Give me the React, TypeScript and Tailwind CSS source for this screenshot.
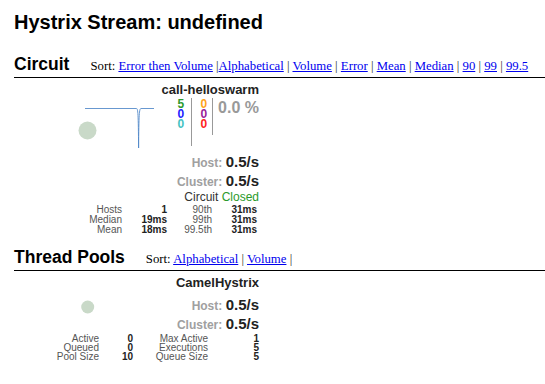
import React from "react";

const sans = { fontFamily: '"Liberation Sans", Arial, Helvetica, sans-serif' };
const serif = { fontFamily: '"Liberation Serif", "Times New Roman", serif' };

function Link({ children }: { children: React.ReactNode }) {
  return <a className="text-[#0000ee] underline cursor-pointer">{children}</a>;
}

function Sep({ text }: { text: string }) {
  return <span className="text-[#333]">{text}</span>;
}

function SectionHeader({ title, children }: { title: string; children: React.ReactNode }) {
  return (
    <div className="flex items-baseline border-b border-black pb-[3px]">
      <div className="text-[17.5px] font-bold leading-[20px] text-black">{title}</div>
      <div className="ml-[21px] text-[12.75px] leading-[15px] text-black" style={serif}>
        {children}
      </div>
    </div>
  );
}

function RateRows() {
  return (
    <div className="flex flex-col items-end">
      <div className="leading-[17px] whitespace-pre">
        <span className="text-[12px] font-bold text-[#a0a0a0]">Host: </span>
        <span className="text-[15px] font-bold text-[#222]">0.5/s</span>
      </div>
      <div className="leading-[17px] whitespace-pre">
        <span className="text-[12px] font-bold text-[#a0a0a0]">Cluster: </span>
        <span className="text-[15px] font-bold text-[#222]">0.5/s</span>
      </div>
    </div>
  );
}

export default function App() {
  return (
    <div className="min-h-[384px] w-[545px] bg-white pl-[14px] text-black" style={sans}>
      <div className="pt-[11px] text-[20px] font-bold leading-[23px]">Hystrix Stream: undefined</div>

      <div className="mt-[20px]">
        <SectionHeader title="Circuit">
          Sort: <Link>Error then Volume</Link> <Sep text="|" />
          <Link>Alphabetical</Link> <Sep text="|" /> <Link>Volume</Link> <Sep text="|" /> <Link>Error</Link>{" "}
          <Sep text="|" /> <Link>Mean</Link> <Sep text="|" /> <Link>Median</Link> <Sep text="|" /> <Link>90</Link>{" "}
          <Sep text="|" /> <Link>99</Link> <Sep text="|" /> <Link>99.5</Link>
        </SectionHeader>
      </div>

      {/* Circuit monitor */}
      <div className="flex w-[245px] flex-col">
        <div className="flex">
          <svg width="143" height="70" viewBox="0 0 143 70" className="shrink-0">
            <circle cx="73.5" cy="52.5" r="9" fill="#c9d9c8" />
            <path
              d="M71 30.5 H122.5 C124 30.5 124.3 36 124.6 70 C124.9 36 125.2 30.5 127 30.5 H140"
              fill="none"
              stroke="#4d86c8"
              strokeWidth="1"
              opacity="0.85"
            />
          </svg>
          <div className="flex flex-1 flex-col items-end">
            <div className="mt-[4px] text-[13px] font-bold leading-[16px] text-[#222]">call-helloswarm</div>
            <div className="flex items-start">
              <div className="flex h-[48px] w-[16px] flex-col items-end border-r border-[#999] pr-[7px] pt-[1px] text-[12px] font-bold leading-[10px]">
                <span className="text-[#2e9a2e]">5</span>
                <span className="text-[#2222ff]">0</span>
                <span className="text-[#44c2c2]">0</span>
              </div>
              <div className="flex h-[37px] w-[21px] flex-col items-end border-r border-[#999] pr-[5px] pt-[1px] text-[12px] font-bold leading-[10px]">
                <span className="text-[#ffa31a]">0</span>
                <span className="text-[#992299]">0</span>
                <span className="text-[#ff2222]">0</span>
              </div>
              <div className="pl-[5px] pt-[2px] text-[16px] font-bold leading-[16px] text-[#999]">0.0 %</div>
            </div>
          </div>
        </div>

        <div className="mt-[5px]">
          <RateRows />
        </div>
        <div className="text-right text-[12px] leading-[13px] text-[#333]">
          Circuit <span className="text-[#2a9a2a]">Closed</span>
        </div>

        <div className="mt-[1px] grid grid-cols-[108px_45px_45px_45px] text-right text-[10px] leading-[10px]">
          <span className="text-[#555]">Hosts</span>
          <span className="font-bold text-[#222]">1</span>
          <span className="text-[#555]">90th</span>
          <span className="font-bold text-[#222]">31ms</span>
          <span className="text-[#555]">Median</span>
          <span className="font-bold text-[#222]">19ms</span>
          <span className="text-[#555]">99th</span>
          <span className="font-bold text-[#222]">31ms</span>
          <span className="text-[#555]">Mean</span>
          <span className="font-bold text-[#222]">18ms</span>
          <span className="text-[#555]">99.5th</span>
          <span className="font-bold text-[#222]">31ms</span>
        </div>
      </div>

      <div className="mt-[12px]">
        <SectionHeader title="Thread Pools">
          Sort: <Link>Alphabetical</Link> <Sep text="|" /> <Link>Volume</Link> <Sep text="|" />
        </SectionHeader>
      </div>

      {/* Thread pool monitor */}
      <div className="flex w-[245px] flex-col">
        <div className="mt-[4px] text-right text-[13px] font-bold leading-[16px] text-[#222]">CamelHystrix</div>
        <div className="mt-[5px] flex">
          <svg width="143" height="34" viewBox="0 0 143 34" className="shrink-0">
            <circle cx="73.7" cy="11" r="6.5" fill="#c9d9c8" />
          </svg>
          <div className="flex-1">
            <RateRows />
          </div>
        </div>
        <div className="mt-[0px] grid grid-cols-[85px_34px_75px_51px] text-right text-[10px] leading-[9px]">
          <span className="text-[#555]">Active</span>
          <span className="font-bold text-[#222]">0</span>
          <span className="text-[#555]">Max Active</span>
          <span className="font-bold text-[#222]">1</span>
          <span className="text-[#555]">Queued</span>
          <span className="font-bold text-[#222]">0</span>
          <span className="text-[#555]">Executions</span>
          <span className="font-bold text-[#222]">5</span>
          <span className="text-[#555]">Pool Size</span>
          <span className="font-bold text-[#222]">10</span>
          <span className="text-[#555]">Queue Size</span>
          <span className="font-bold text-[#222]">5</span>
        </div>
      </div>
    </div>
  );
}
